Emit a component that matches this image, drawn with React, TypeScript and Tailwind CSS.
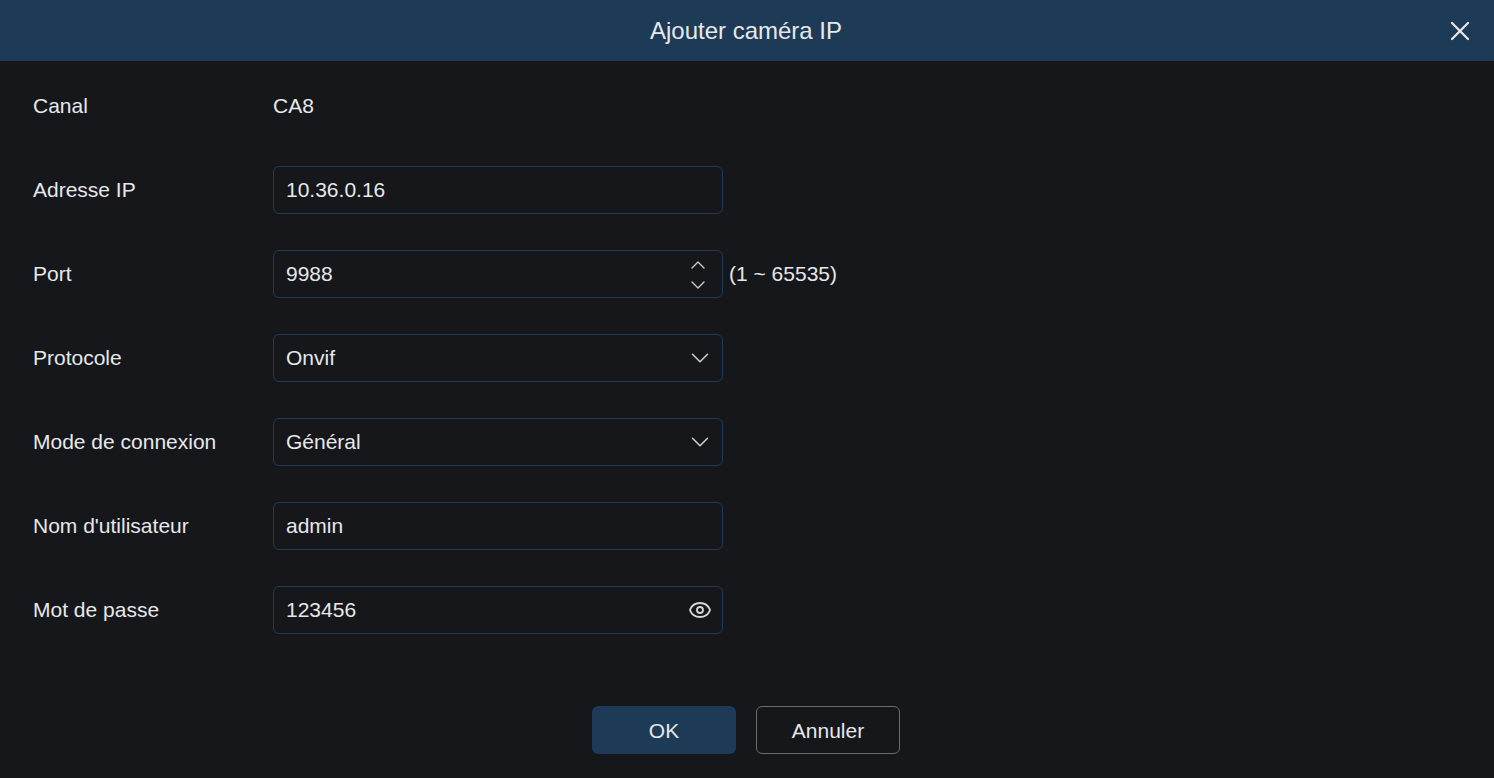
import { ChevronDown, ChevronUp, Eye, X } from 'lucide-react'
import type { ReactNode } from 'react'

const boxClass =
  'flex h-12 w-[450px] items-center justify-between rounded-md border border-[#1d3a56] pl-3 pr-[13px] text-[#e6e8ea]'

function Row({ label, children }: { label: string; children: ReactNode }) {
  return (
    <div className="flex h-12 items-center">
      <div className="w-[240px] pb-[2px] text-[#e6e8ea]">{label}</div>
      {children}
    </div>
  )
}

function Select({ value }: { value: string }) {
  return (
    <div className={boxClass}>
      <span className="pb-[2px]">{value}</span>
      <ChevronDown size={30} strokeWidth={1.3} className="-mr-[6px] text-[#c9cccf]" />
    </div>
  )
}

export default function App() {
  return (
    <div className="flex h-[778px] w-[1494px] flex-col overflow-hidden bg-[#15171b] font-['Liberation_Sans',Arial,sans-serif] text-[21px] leading-none">
      {/* Header */}
      <header className="relative flex h-[61px] shrink-0 items-center justify-center bg-[#1d3a56] pr-[2px]">
        <h1 className="text-[24px] font-normal text-[#e6e8ea]">Ajouter caméra IP</h1>
        <button className="absolute right-[18px] top-[15px] text-[#e6e8ea]" aria-label="Fermer">
          <X size={32} strokeWidth={1.7} />
        </button>
      </header>

      {/* Form */}
      <div className="flex flex-col gap-9 pl-[33px] pt-[21px]">
        <Row label="Canal">
          <span className="pb-[2px] text-[#e6e8ea]">CA8</span>
        </Row>
        <Row label="Adresse IP">
          <div className={boxClass}>
            <span className="pb-[2px]">10.36.0.16</span>
          </div>
        </Row>
        <Row label="Port">
          <div className={boxClass}>
            <span className="pb-[2px]">9988</span>
            <div className="-mr-[1px] mt-[2px] flex flex-col text-[#c9cccf]">
              <ChevronUp size={24} strokeWidth={1.4} />
              <ChevronDown size={24} strokeWidth={1.4} className="-mt-[4px]" />
            </div>
          </div>
          <span className="ml-[6px] pb-[2px] text-[#e6e8ea]">(1 ~ 65535)</span>
        </Row>
        <Row label="Protocole">
          <Select value="Onvif" />
        </Row>
        <Row label="Mode de connexion">
          <Select value="Général" />
        </Row>
        <Row label="Nom d'utilisateur">
          <div className={boxClass}>
            <span className="pb-[2px]">admin</span>
          </div>
        </Row>
        <Row label="Mot de passe">
          <div className={boxClass}>
            <span className="pb-[2px]">123456</span>
            <Eye size={24} strokeWidth={1.8} className="-mr-[3px] text-[#d5d7da]" />
          </div>
        </Row>
      </div>

      {/* Buttons */}
      <div className="mt-[72px] flex justify-center gap-5 pr-[2px]">
        <button className="h-12 w-36 rounded-md bg-[#1d3a56] text-[#e6e8ea]">OK</button>
        <button className="h-12 w-36 rounded-md border border-[#6a6c70] text-[#e6e8ea]">Annuler</button>
      </div>
    </div>
  )
}
